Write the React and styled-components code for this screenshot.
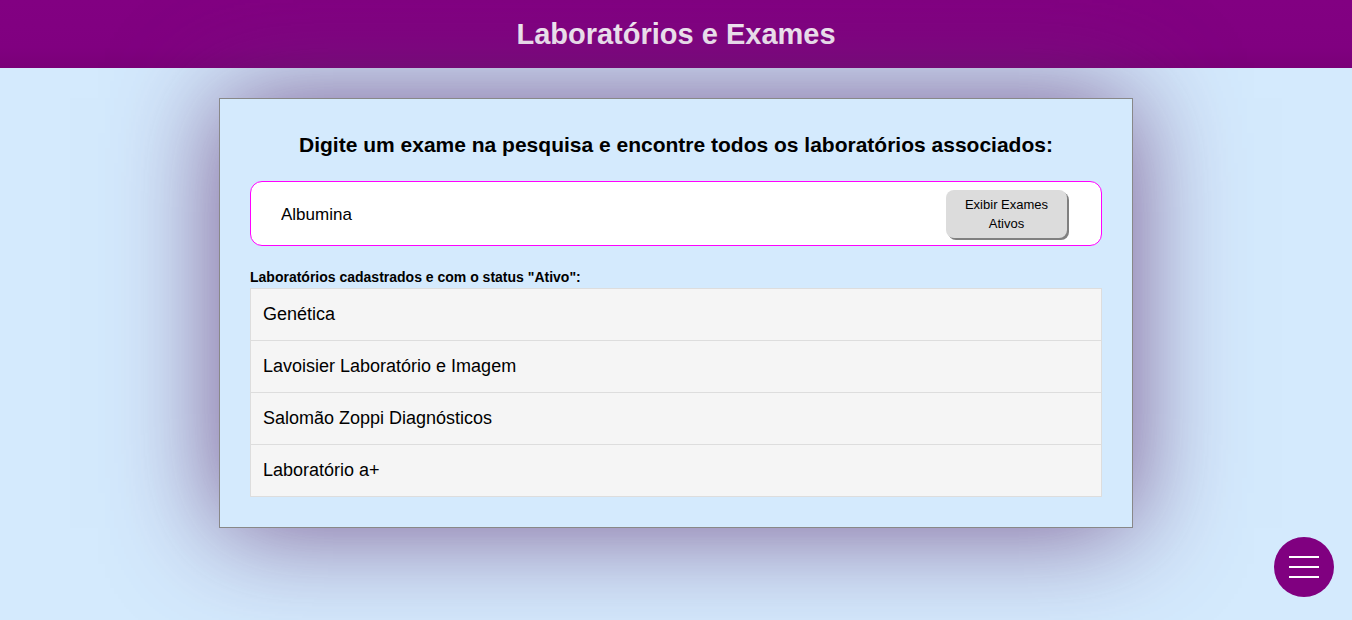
import React from "react";
import styled, { createGlobalStyle } from "styled-components";

const GlobalStyle = createGlobalStyle`
  html, body {
    margin: 0;
    padding: 0;
    background: #d4eafd;
    font-family: "Liberation Sans", Arial, sans-serif;
    color: #000;
  }
`;

const Page = styled.div`
  min-height: 100vh;
  overflow: hidden;
`;

const Header = styled.header`
  height: 68px;
  background: linear-gradient(180deg, #820082 0%, #800080 70%, #7a0078 100%);
  display: flex;
  align-items: center;
  justify-content: center;
`;

const Title = styled.h1`
  margin: 0;
  font-size: 29px;
  font-weight: bold;
  color: #f6eef6;
`;

const Main = styled.main`
  display: flex;
  justify-content: center;
  padding: 30px 0 120px;
`;

const Card = styled.section`
  width: 852px;
  padding: 30px;
  background: #d4eafd;
  border: 1px solid #888;
  box-shadow: 0 0 100px 0 rgba(100, 50, 115, 0.8);
`;

const Heading = styled.h2`
  margin: 0 0 20px;
  font-size: 21px;
  line-height: 32px;
  font-weight: bold;
  text-align: center;
`;

const SearchBox = styled.div`
  height: 63px;
  background: #fff;
  border: 1px solid #f0f;
  border-radius: 12px;
  display: flex;
  align-items: center;
  justify-content: space-between;
  padding: 0 34px 0 30px;
  margin-bottom: 21px;
`;

const SearchInput = styled.input`
  border: none;
  outline: none;
  background: transparent;
  font-family: inherit;
  font-size: 17px;
  color: #000;
  flex: 1;
  padding: 2px 0 0;
`;

const ToggleButton = styled.button`
  width: 121px;
  height: 48px;
  border: none;
  border-radius: 8px;
  background: #dcdcdc;
  box-shadow: 2px 2px 0 #808080;
  font-family: inherit;
  font-size: 13px;
  line-height: 19px;
  color: #000;
  padding: 0 12px;
`;

const Label = styled.div`
  font-size: 14px;
  font-weight: bold;
  line-height: 21px;
`;

const List = styled.ul`
  list-style: none;
  margin: 0;
  padding: 0;
  border: 1px solid #ddd;
  border-bottom: none;
`;

const Item = styled.li`
  height: 51px;
  display: flex;
  align-items: center;
  padding-left: 12px;
  background: #f5f5f5;
  border-bottom: 1px solid #ddd;
  font-size: 18px;
`;

const Fab = styled.button`
  position: fixed;
  right: 18px;
  bottom: 23px;
  width: 60px;
  height: 60px;
  border: none;
  border-radius: 50%;
  background: #800080;
  display: flex;
  flex-direction: column;
  align-items: center;
  justify-content: center;
  gap: 8px;
  padding: 0;
`;

const Bar = styled.span`
  width: 30px;
  height: 2px;
  background: #fff;
`;

const labs = [
  "Genética",
  "Lavoisier Laboratório e Imagem",
  "Salomão Zoppi Diagnósticos",
  "Laboratório a+",
];

export default function App() {
  return (
    <Page>
      <GlobalStyle />
      <Header>
        <Title>Laboratórios e Exames</Title>
      </Header>
      <Main>
        <Card>
          <Heading>Digite um exame na pesquisa e encontre todos os laboratórios associados:</Heading>
          <SearchBox>
            <SearchInput defaultValue="Albumina" />
            <ToggleButton>Exibir Exames Ativos</ToggleButton>
          </SearchBox>
          <Label>Laboratórios cadastrados e com o status "Ativo":</Label>
          <List>
            {labs.map((lab) => (
              <Item key={lab}>{lab}</Item>
            ))}
          </List>
        </Card>
      </Main>
      <Fab aria-label="menu">
        <Bar />
        <Bar />
        <Bar />
      </Fab>
    </Page>
  );
}
